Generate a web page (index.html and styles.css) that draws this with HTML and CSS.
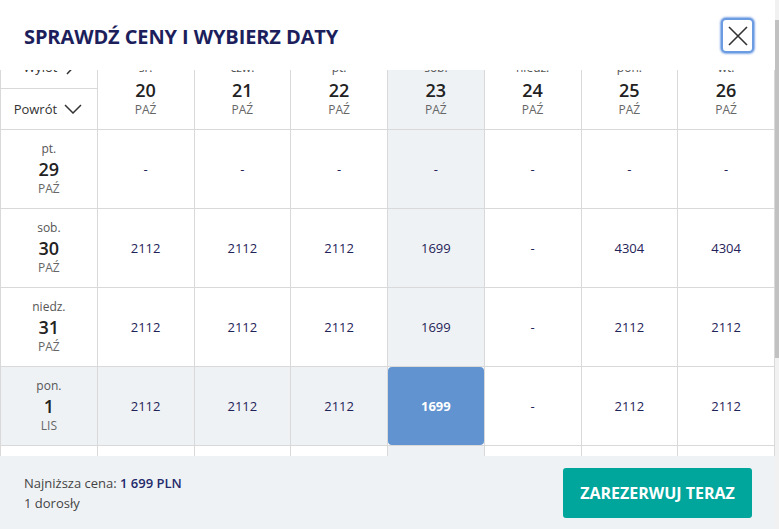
FILE: index.html
```
<!DOCTYPE html>
<html>
<head>
    <title>Sprawdź ceny</title>
    <link rel="stylesheet" href="styles.css">
</head>
<body>
<div class="page">
    <div class="modal">
        <div class="modal-head">
            <h2>SPRAWDŹ CENY I WYBIERZ DATY</h2>
            <button class="close-btn">
                <svg width="20" height="20" viewBox="0 0 20 20"><path d="M1 1 L19 19 M19 1 L1 19" stroke="#333" stroke-width="1.6" fill="none"/></svg>
            </button>
        </div>

        <div class="grid-scroll">
            <div class="grid">
                <div class="cell corner">
                    <div class="corner-out">Wylot <svg width="9" height="17" viewBox="0 0 9 17"><path d="M1 1 L8 8.5 L1 16" stroke="#333" stroke-width="1.5" fill="none"/></svg></div>
                    <div class="corner-ret">Powrót <svg width="18" height="10" viewBox="0 0 18 10"><path d="M1 1 L9 9 L17 1" stroke="#333" stroke-width="1.5" fill="none"/></svg></div>
                </div>
                <div class="cell head"><span class="dname">śr.</span><span class="dnum">20</span><span class="dmon">PAŹ</span></div>
                <div class="cell head"><span class="dname">czw.</span><span class="dnum">21</span><span class="dmon">PAŹ</span></div>
                <div class="cell head"><span class="dname">pt.</span><span class="dnum">22</span><span class="dmon">PAŹ</span></div>
                <div class="cell head shade"><span class="dname">sob.</span><span class="dnum">23</span><span class="dmon">PAŹ</span></div>
                <div class="cell head"><span class="dname">niedz.</span><span class="dnum">24</span><span class="dmon">PAŹ</span></div>
                <div class="cell head"><span class="dname">pon.</span><span class="dnum">25</span><span class="dmon">PAŹ</span></div>
                <div class="cell head last"><span class="dname">wt.</span><span class="dnum">26</span><span class="dmon">PAŹ</span></div>

                <div class="cell side"><span class="dname">pt.</span><span class="dnum">29</span><span class="dmon">PAŹ</span></div>
                <div class="cell price">-</div>
                <div class="cell price">-</div>
                <div class="cell price">-</div>
                <div class="cell price shade">-</div>
                <div class="cell price">-</div>
                <div class="cell price">-</div>
                <div class="cell price last">-</div>

                <div class="cell side"><span class="dname">sob.</span><span class="dnum">30</span><span class="dmon">PAŹ</span></div>
                <div class="cell price">2112</div>
                <div class="cell price">2112</div>
                <div class="cell price">2112</div>
                <div class="cell price shade">1699</div>
                <div class="cell price">-</div>
                <div class="cell price">4304</div>
                <div class="cell price last">4304</div>

                <div class="cell side"><span class="dname">niedz.</span><span class="dnum">31</span><span class="dmon">PAŹ</span></div>
                <div class="cell price">2112</div>
                <div class="cell price">2112</div>
                <div class="cell price">2112</div>
                <div class="cell price shade">1699</div>
                <div class="cell price">-</div>
                <div class="cell price">2112</div>
                <div class="cell price last">2112</div>

                <div class="cell side shade"><span class="dname">pon.</span><span class="dnum">1</span><span class="dmon">LIS</span></div>
                <div class="cell price shade">2112</div>
                <div class="cell price shade">2112</div>
                <div class="cell price shade">2112</div>
                <div class="cell price selected"><div class="sel-box">1699</div></div>
                <div class="cell price">-</div>
                <div class="cell price">2112</div>
                <div class="cell price last">2112</div>

                <div class="cell side"><span class="dname">wt.</span><span class="dnum">2</span><span class="dmon">LIS</span></div>
                <div class="cell price">2112</div>
                <div class="cell price">2112</div>
                <div class="cell price">2112</div>
                <div class="cell price shade">1699</div>
                <div class="cell price">-</div>
                <div class="cell price">2112</div>
                <div class="cell price last">2112</div>
            </div>
        </div>

        <div class="modal-foot">
            <div class="summary">
                <p>Najniższa cena: <span class="lowest">1 699 PLN</span></p>
                <p>1 dorosły</p>
            </div>
            <button class="book-btn">ZAREZERWUJ TERAZ</button>
        </div>
    </div>
    <div class="scrollbar"><div class="thumb"></div></div>
</div>
</body>
</html>
```

FILE: styles.css
```
body {
    margin: 0;
    font-family: "Open Sans", Arial, sans-serif;
    overflow: hidden;
    background-color: white;
}

.page {
    display: flex;
    height: 529px;
}

.modal {
    width: 775px;
    display: flex;
    flex-direction: column;
}

.modal-head {
    height: 70px;
    display: flex;
    align-items: center;
    justify-content: space-between;
    padding: 0 21px 0 24px;
}

.modal-head h2 {
    margin: 2px 0 0 0;
    font-size: 20px;
    font-weight: 700;
    color: #1c1f5c;
    letter-spacing: -0.1px;
}

.close-btn {
    width: 33px;
    height: 35px;
    padding: 0;
    margin-top: 1px;
    background-color: white;
    border: 2px solid #6b9be0;
    border-radius: 5px;
    box-shadow: 0 0 2px 1px #84aae6;
    display: flex;
    align-items: center;
    justify-content: center;
}

.grid-scroll {
    height: 386px;
    overflow: hidden;
}

.grid {
    margin-top: -20px;
    display: grid;
    grid-template-columns: repeat(7, 96.75px) 97.75px;
}

.cell {
    box-sizing: border-box;
    height: 79px;
    border-left: 1px solid #d9d9d9;
    border-bottom: 1px solid #d9d9d9;
    display: flex;
    flex-direction: column;
    align-items: center;
    justify-content: center;
    text-align: center;
}

.cell.head, .cell.corner {
    height: 80px;
}

.cell.head .dname {
    margin-top: -2px;
    margin-bottom: 2px;
}

.cell.last {
    border-right: 1px solid #d9d9d9;
}

.shade {
    background-color: #eff2f5;
}

.dname {
    font-size: 12px;
    line-height: 18px;
    color: #555;
}

.dnum {
    font-size: 18px;
    font-weight: 600;
    line-height: 22px;
    color: #222;
}

.dmon {
    font-size: 12px;
    line-height: 18px;
    color: #666;
}

.corner {
    justify-content: stretch;
    align-items: stretch;
}

.corner-out {
    box-sizing: border-box;
    height: 39px;
    border-bottom: 1px solid #d9d9d9;
    display: flex;
    align-items: center;
    justify-content: center;
    gap: 8px;
    font-size: 13px;
    color: #333;
    padding-bottom: 5px;
}

.corner-ret {
    flex: 1;
    display: flex;
    align-items: center;
    justify-content: center;
    gap: 7px;
    font-size: 13px;
    color: #333;
    padding-right: 2px;
}

.price {
    font-size: 13px;
    color: #1f2358;
}

.selected {
    padding: 0;
    align-items: stretch;
}

.sel-box {
    flex: 1;
    background-color: #6193d0;
    border-radius: 4px;
    color: white;
    font-weight: 700;
    display: flex;
    align-items: center;
    justify-content: center;
}

.modal-foot {
    flex: 1;
    background-color: #eff2f5;
    display: flex;
    align-items: center;
    justify-content: space-between;
    padding: 0 23px 0 24px;
}

.summary p {
    margin: 0;
    font-size: 13px;
    line-height: 20px;
    color: #444;
}

.lowest {
    color: #242a6b;
    font-weight: 600;
}

.book-btn {
    width: 189px;
    height: 50px;
    background-color: #00a69c;
    color: white;
    border: none;
    border-radius: 3px;
    font-family: "Open Sans", Arial, sans-serif;
    font-size: 16px;
    font-weight: 700;
}

.scrollbar {
    width: 4px;
    background-color: #f1f1f1;
}

.thumb {
    margin-top: 20px;
    height: 338px;
    background-color: #c1c1c1;
}
```
